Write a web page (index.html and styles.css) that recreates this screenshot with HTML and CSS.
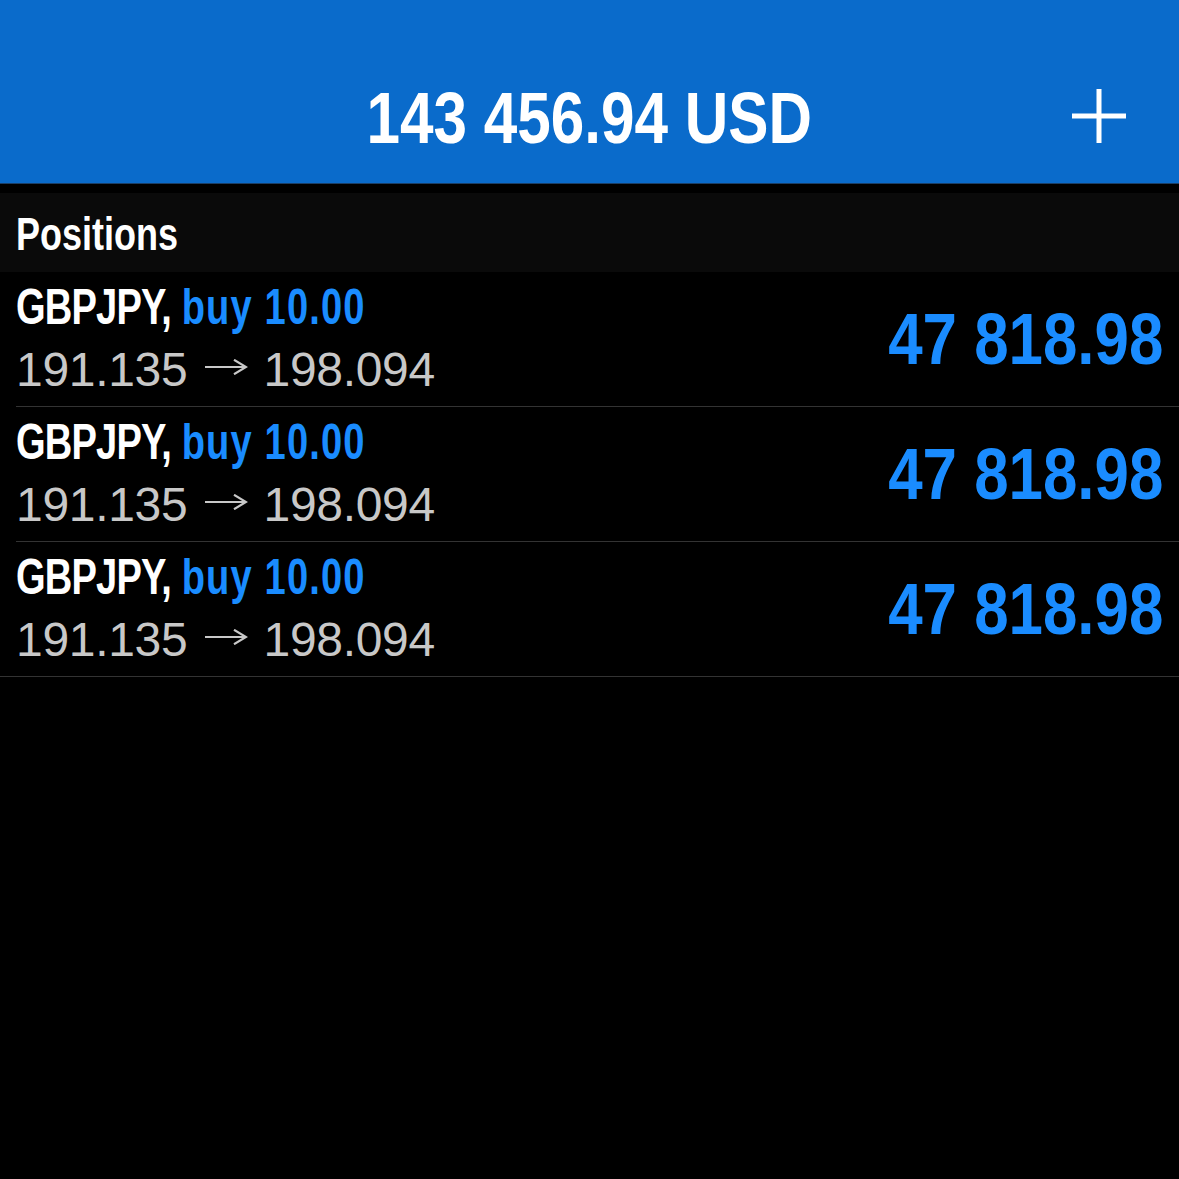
FILE: index.html
```html
<!DOCTYPE html>
<html>
<head>
<meta charset="utf-8">
<link rel="stylesheet" href="styles.css">
</head>
<body>
<div class="app">
  <header class="topbar">
    <div class="topbar-side"></div>
    <div class="balance"><span class="cond cond-center">143 456.94 USD</span></div>
    <div class="topbar-side topbar-right">
      <svg class="plus" width="54" height="54" viewBox="0 0 54 54">
        <rect x="0" y="24.5" width="54" height="5" fill="#fff"/>
        <rect x="24.5" y="0" width="5" height="54" fill="#fff"/>
      </svg>
    </div>
  </header>
  <div class="gap"></div>
  <div class="section"><span class="cond cond-left">Positions</span></div>
  <div class="list">
    <div class="row">
      <div class="info">
        <div class="title"><span class="cond cond-left"><span class="sym">GBPJPY,</span> <span class="side">buy 10.00</span></span></div>
        <div class="prices">191.135 <svg class="arrow" width="44" height="16" viewBox="0 0 44 16"><path d="M1 8H42M30 0.8L42 8L30 15.2" fill="none" stroke="#c8c8c8" stroke-width="2.2"/></svg> 198.094</div>
      </div>
      <div class="profit"><span class="cond cond-right">47 818.98</span></div>
    </div>
    <div class="row">
      <div class="info">
        <div class="title"><span class="cond cond-left"><span class="sym">GBPJPY,</span> <span class="side">buy 10.00</span></span></div>
        <div class="prices">191.135 <svg class="arrow" width="44" height="16" viewBox="0 0 44 16"><path d="M1 8H42M30 0.8L42 8L30 15.2" fill="none" stroke="#c8c8c8" stroke-width="2.2"/></svg> 198.094</div>
      </div>
      <div class="profit"><span class="cond cond-right">47 818.98</span></div>
    </div>
    <div class="row row-last">
      <div class="info">
        <div class="title"><span class="cond cond-left"><span class="sym">GBPJPY,</span> <span class="side">buy 10.00</span></span></div>
        <div class="prices">191.135 <svg class="arrow" width="44" height="16" viewBox="0 0 44 16"><path d="M1 8H42M30 0.8L42 8L30 15.2" fill="none" stroke="#c8c8c8" stroke-width="2.2"/></svg> 198.094</div>
      </div>
      <div class="profit"><span class="cond cond-right">47 818.98</span></div>
    </div>
  </div>
</div>
</body>
</html>
```
FILE: styles.css
```css
html, body {
  margin: 0;
  padding: 0;
  background: #000;
}
body {
  width: 1179px;
  height: 1179px;
  overflow: hidden;
  font-family: "Liberation Sans", Arial, sans-serif;
}
.app {
  display: flex;
  flex-direction: column;
}
/* condensed bold look: Liberation Sans Bold narrowed horizontally */
.cond {
  display: inline-block;
  font-family: "Liberation Sans", Arial, sans-serif;
  font-weight: 700;
  white-space: nowrap;
}
.cond-left { transform-origin: left center; }
.cond-right { transform-origin: right center; }
.cond-center { transform-origin: center center; }

.topbar {
  box-sizing: border-box;
  height: 184px;
  background: #0a6bcb;
  border-bottom: 1px solid #1b3f66;
  display: grid;
  grid-template-columns: 1fr auto 1fr;
  align-items: start;
  padding-top: 82px;
}
.balance {
  font-size: 72px;
  line-height: 72px;
  color: #fff;
  white-space: nowrap;
}
.balance .cond {
  transform: scaleX(0.837);
}
.topbar-right {
  display: flex;
  justify-content: flex-end;
  padding-right: 53px;
  padding-top: 7px;
}
.plus {
  display: block;
}
.gap {
  height: 9px;
  background: #000;
}
.section {
  box-sizing: border-box;
  height: 79px;
  background: #0a0a0a;
  padding: 17px 16px 0;
  font-size: 47px;
  line-height: 47px;
  color: #fff;
}
.section .cond {
  transform: scaleX(0.766);
}
.row {
  box-sizing: border-box;
  height: 135px;
  display: flex;
  align-items: center;
  justify-content: space-between;
  padding: 0 16px 0 0;
  border-bottom: 1px solid #333;
  margin-left: 16px;
}
.row-last {
  margin-left: 0;
  padding-left: 16px;
}
.info {
  display: flex;
  flex-direction: column;
  gap: 3px;
  padding-bottom: 1px;
}
.title {
  font-size: 50px;
  line-height: 60px;
  height: 60px;
  color: #fff;
  white-space: nowrap;
}
.title .cond {
  transform: scaleX(0.762);
}
.sym {
  letter-spacing: -1.1px;
}
.side {
  color: #1a8cff;
  letter-spacing: 1.5px;
}
.prices {
  font-size: 48px;
  line-height: 60px;
  letter-spacing: -0.3px;
  color: #c8c8c8;
  white-space: nowrap;
}
.arrow {
  display: inline-block;
  vertical-align: 11.5px;
  margin: 0 2px 0 4px;
}
.profit {
  font-size: 72px;
  line-height: 72px;
  color: #1a8cff;
  white-space: nowrap;
}
.profit .cond {
  transform: scaleX(0.859);
}
```
